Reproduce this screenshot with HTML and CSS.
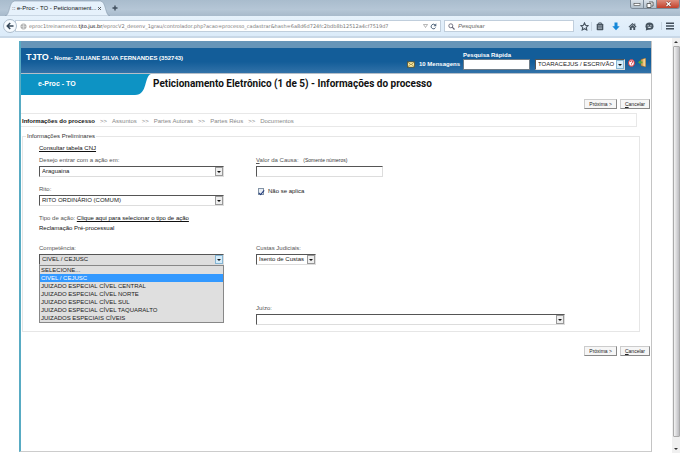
FILE: index.html
```
<!DOCTYPE html>
<html lang="pt-BR">
<head>
<meta charset="utf-8">
<title>e-Proc - TO - Peticionamento Eletrônico</title>
<link rel="stylesheet" href="styles.css">
</head>
<body>
<header class="browser">
  <div class="tabbar">
    <div class="tab">
      <svg class="tab-shape" viewBox="0 0 108 16" preserveAspectRatio="none" aria-hidden="true"><path d="M0 16C5 16 4 1 10 1H98C104 1 103 16 108 16Z" fill="#e6f1fb" stroke="#8497aa" stroke-width=".6"/></svg>
      <span class="tab-title">:: e-Proc - TO - Peticionament...</span>
      <button class="plain" aria-label="Fechar aba"><svg width="5" height="5" viewBox="0 0 5 5"><path d="M1 1l3 3M4 1L1 4" stroke="#444" stroke-width=".8"/></svg></button>
    </div>
    <button class="plain" aria-label="Nova aba"><svg width="6" height="6" viewBox="0 0 6 6"><path d="M3 .5v5M.5 3h5" stroke="#3f4d5c" stroke-width="1.4"/></svg></button>
    <div class="window-buttons">
      <button class="win" aria-label="Minimizar"><svg width="8" height="6" viewBox="0 0 8 6"><rect x="1" y="2.5" width="6" height="2" fill="#fff" stroke="#444" stroke-width=".6"/></svg></button>
      <button class="win" aria-label="Restaurar"><svg width="8" height="7" viewBox="0 0 8 7"><path d="M3 1h4v4H6M1 2.500h4v4H1z" fill="#fff" stroke="#444" stroke-width=".8"/></svg></button>
      <button class="win close" aria-label="Fechar"><svg width="7" height="6" viewBox="0 0 7 6"><path d="M1.500 1l4 4M5.500 1l-4 4" stroke="#6b2a20" stroke-width="2.200"/><path d="M1.500 1l4 4M5.500 1l-4 4" stroke="#fff" stroke-width="1.300"/></svg></button>
    </div>
  </div>
  <div class="toolbar">
    <button class="back" aria-label="Voltar"><svg width="8" height="8" viewBox="0 0 8 8"><path d="M7.500 4H1.500M4.200 1L1.300 4l2.900 3" fill="none" stroke="#39495a" stroke-width="1.600"/></svg></button>
    <div class="urlbar">
      <svg width="7" height="7" viewBox="0 0 7 7"><circle cx="3.500" cy="3.500" r="3" fill="#aaa"/><path d="M.7 3.500h5.600M3.500.500v6M1.300 1.500q2.200 1.500 4.400 0M1.300 5.500q2.200-1.500 4.400 0" fill="none" stroke="#eee" stroke-width=".5"/></svg>
      <span class="url">eproc1treinamento.<b>tjto.jus.br</b>/eprocV2_desenv_1grau/controlador.php?acao=processo_cadastrar&amp;hash=6a8d6d724fc2bdb8b12512a4cf7519d7</span>
      <svg width="5" height="4" viewBox="0 0 5 4"><path d="M.5.500h4L2.500 3.500z" fill="none" stroke="#888" stroke-width=".6"/></svg>
      <button class="plain" aria-label="Recarregar"><svg width="7" height="7" viewBox="0 0 7 7"><path d="M5.500 4.500A2.300 2.300 0 1 1 5 1.900" fill="none" stroke="#53677d" stroke-width="1"/><path d="M6.300.300v2.900H3.500z" fill="#53677d"/></svg></button>
    </div>
    <label class="searchbar">
      <svg width="7" height="7" viewBox="0 0 7 7"><circle cx="2.800" cy="2.800" r="2" fill="none" stroke="#667" stroke-width=".9"/><path d="M4.200 4.200L6.500 6.500" stroke="#667" stroke-width="1.200"/></svg>
      <input type="search" placeholder="Pesquisar" aria-label="Pesquisar">
    </label>
    <div class="tools">
      <button class="plain" aria-label="Favoritos"><svg width="9" height="9" viewBox="0 0 9 9"><path d="M4.500.900l1.100 2.400 2.500.300-1.800 1.800.5 2.500-2.300-1.200-2.300 1.200.5-2.500L.900 3.600l2.500-.3z" fill="none" stroke="#46535f" stroke-width="1.100"/></svg></button>
      <button class="plain divided" aria-label="Lista"><svg width="8" height="9" viewBox="0 0 8 9"><path d="M2.700 2V.900h2.600V2" fill="none" stroke="#46535f" stroke-width=".9"/><rect x=".7" y="1.800" width="6.600" height="6.400" rx=".8" fill="#46535f"/><path d="M2 3.800h4M2 5.200h4M2 6.600h4" stroke="#cbd5df" stroke-width=".6"/></svg></button>
      <button class="plain" aria-label="Downloads"><svg width="8" height="9" viewBox="0 0 8 9"><path d="M2.500.500h3v3.700h2.200L4 8.300.300 4.200h2.200z" fill="#1487d8"/></svg></button>
      <button class="plain" aria-label="Início"><svg width="9" height="9" viewBox="0 0 9 9"><path d="M4.500 1L.500 4.700l.7.700L4.500 2.400l3.300 3 .7-.7L7.300 3.500V1.500h-1v1.200z" fill="#46535f"/><path d="M1.800 5.300l2.700-2.400 2.700 2.400V8H5.300V5.800H3.700V8H1.800z" fill="#46535f"/></svg></button>
      <button class="plain" aria-label="Conversa"><svg width="9" height="9" viewBox="0 0 9 9"><ellipse cx="4.500" cy="4.200" rx="4" ry="3.600" fill="#46535f"/><path d="M1.300 5.500L.800 8.500 4 7.500z" fill="#46535f"/><circle cx="3.100" cy="3.300" r=".6" fill="#dfe9f2"/><circle cx="5.900" cy="3.300" r=".6" fill="#dfe9f2"/><path d="M2.200 4.700q2.300 2.400 4.600 0z" fill="#dfe9f2"/></svg></button>
      <button class="plain divided" aria-label="Menu"><svg width="8" height="8" viewBox="0 0 8 8"><path d="M0 1.200h8M0 4h8M0 6.800h8" stroke="#414d59" stroke-width="1.500"/></svg></button>
    </div>
  </div>
</header>

<div class="viewport">
  <main class="app">
    <div class="strip"></div>
    <div class="topbar">
      <div class="user"><span class="brand">TJTO</span> - Nome: JULIANE SILVA FERNANDES (352743)</div>
      <a class="messages" href="#"><svg width="8" height="7" viewBox="0 0 8 7"><rect x=".5" y=".8" width="7" height="5.400" fill="#fbe9a0" stroke="#4a4526" stroke-width=".7"/><path d="M.8 1l3.200 2.800L7.200 1M.8 6l2.300-2.500M7.200 6L4.900 3.500" fill="none" stroke="#6c5b1c" stroke-width=".6"/></svg>10 Mensagens</a>
      <div class="quick">
        <label for="quick">Pesquisa Rápida</label>
        <input id="quick" type="text">
      </div>
      <div class="combo active role">
        <select aria-label="Perfil"><option>TOARACEJUS / ESCRIVÃO</option></select><i></i>
      </div>
      <div class="top-icons">
        <a href="#" aria-label="Ajuda"><svg width="7" height="8" viewBox="0 0 7 8"><ellipse cx="3.500" cy="4" rx="2.900" ry="3.400" fill="#fff" stroke="#d22b35" stroke-width="1"/><path d="M2.300 3q.2-1.200 1.300-1.200T4.700 3q0 .6-1.100 1.200v.8M3.600 5.500v.9" fill="none" stroke="#d22b35" stroke-width=".9"/></svg></a>
        <a href="#" aria-label="Sair"><svg width="8" height="9" viewBox="0 0 8 9"><path d="M3 1.500L7.700 0v9L3 7.700z" fill="#d9a558" stroke="#8d6228" stroke-width=".5"/><path d="M5.300 1.300L7.300.6v7.900l-2-.7z" fill="#f3d091"/><path d="M0 4.300l2.600-2.200v1.300H4.500v1.900H2.600v1.300z" fill="#55a43b"/></svg></a>
      </div>
    </div>
    <div class="titlebar">
      <div class="system"><svg viewBox="0 0 130 21" preserveAspectRatio="none" aria-hidden="true"><path d="M0 0H130C123 2 127 21 114 21H0Z" fill="#0d93c4"/></svg><span>e-Proc - TO</span></div>
      <h1>Peticionamento Eletrônico (1 de 5) - Informações do processo</h1>
    </div>
    <div class="actions top"><button>Próxima &gt;</button><button><u>C</u>ancelar</button></div>
    <nav class="steps"><strong>Informações do processo</strong><span>&gt;&gt;</span><span>Assuntos</span><span>&gt;&gt;</span><span>Partes Autoras</span><span>&gt;&gt;</span><span>Partes Réus</span><span>&gt;&gt;</span><span>Documentos</span></nav>

    <fieldset>
      <legend>Informações Preliminares</legend>
      <div class="form">
        <div class="cell">
          <a class="cnj" href="#">Consultar tabela CNJ</a>
          <label for="local">Desejo entrar com a ação em:</label>
          <div class="combo"><select id="local"><option>Araguaina</option></select><i></i></div>
        </div>
        <div class="cell bottom">
          <label for="valor"><u>V</u>alor da Causa: <small>(Somente números)</small></label>
          <input id="valor" class="money" type="text">
        </div>
        <div class="cell">
          <label for="rito">Rito:</label>
          <div class="combo"><select id="rito"><option>RITO ORDINÁRIO (COMUM)</option></select><i></i></div>
        </div>
        <div class="cell">
          <label class="check"><input type="checkbox" checked> Não se aplica</label>
        </div>
        <div class="cell wide">
          <div class="line">Tipo de ação: <a href="#">Clique aqui para selecionar o tipo de ação</a></div>
          <div class="line dark">Reclamação Pré-processual</div>
        </div>
        <div class="cell tall">
          <label for="comp">Competência:</label>
          <div class="combo active open">
            <select id="comp"><option>CIVEL / CEJUSC</option></select><i></i>
            <ul class="menu" role="listbox" aria-label="Competência">
              <li role="option">SELECIONE...</li>
              <li role="option" aria-selected="true">CIVEL / CEJUSC</li>
              <li role="option">JUIZADO ESPECIAL CÍVEL CENTRAL</li>
              <li role="option">JUIZADO ESPECIAL CÍVEL NORTE</li>
              <li role="option">JUIZADO ESPECIAL CÍVEL SUL</li>
              <li role="option">JUIZADO ESPECIAL CÍVEL TAQUARALTO</li>
              <li role="option">JUIZADOS ESPECIAIS CÍVEIS</li>
            </ul>
          </div>
        </div>
        <div class="cell tall">
          <label for="custas">Custas Judiciais:</label>
          <div class="combo small"><select id="custas"><option>Isento de Custas</option></select><i></i></div>
        </div>
        <div class="cell second">
          <label for="juizo">Juízo:</label>
          <div class="combo long"><select id="juizo"><option></option></select><i></i></div>
        </div>
      </div>
    </fieldset>
    <div class="actions"><button>Próxima &gt;</button><button><u>C</u>ancelar</button></div>
  </main>
  <div class="scrollbar" aria-hidden="true"><b class="up"></b><span></span><b class="down"></b></div>
</div>
</body>
</html>
```
FILE: styles.css
```
* { box-sizing: border-box; }
body {
  margin: 0;
  height: 100vh;
  display: flex;
  flex-direction: column;
  background: #fff;
  color: #222;
  font: 6px/8px "Liberation Sans", Arial, sans-serif;
}
button, input, select { font: inherit; color: inherit; margin: 0; }
svg { display: block; flex: none; }
a { color: inherit; }
.plain { border: 0; padding: 0; background: none; }

/* Browser frame */
.browser { flex: none; }
.tabbar {
  height: 16px;
  display: flex;
  align-items: center;
  gap: 2px;
  padding-left: 5px;
  background: linear-gradient(#a9bccd, #b5c6d6 60%, #a8bacb);
}
.tab {
  position: relative;
  width: 105px;
  height: 16px;
  display: flex;
  align-items: center;
  justify-content: space-between;
  padding: 0 8px 0 7px;
}
.tab-shape { position: absolute; inset: 0; width: 100%; height: 100%; }
.tab > :not(.tab-shape) { position: relative; }
.tab-title { white-space: nowrap; color: #111; }
.window-buttons {
  align-self: flex-start;
  margin-left: auto;
  display: flex;
  height: 9px;
  border: 1px solid #7c8a98;
  border-top: 0;
  border-radius: 0 0 3px 3px;
  overflow: hidden;
}
.win {
  width: 13px;
  padding: 0;
  display: grid;
  place-items: center;
  border: 0;
  border-right: 1px solid #7c8a98;
  background: linear-gradient(#dbe3ea, #b1bfcb);
}
.win.close { width: 22px; border: 0; background: linear-gradient(#dd8c7c, #c3402b); }
.toolbar {
  height: 22px;
  display: flex;
  align-items: center;
  gap: 3px;
  padding: 0 6px 0 3px;
  background: linear-gradient(#e6f1fb, #dcebf9);
  border-bottom: 2px solid #c9d8e7;
}
.back {
  position: relative;
  width: 14px;
  height: 14px;
  margin-right: -5px;
  padding: 0;
  display: grid;
  place-items: center;
  border: 1px solid #aebdcc;
  border-radius: 50%;
  background: #f7fbff;
}
.urlbar, .searchbar {
  height: 12px;
  display: flex;
  align-items: center;
  gap: 3px;
  border: 1px solid #c0cedc;
  background: #fff;
}
.urlbar { flex: 1; min-width: 0; padding: 0 3px 0 4px; gap: 2px; color: #777; }
.url { flex: 1; white-space: nowrap; overflow: hidden; font-family: "DejaVu Sans", sans-serif; font-size: 5px; }
.url b { font-weight: 400; color: #000; }
.searchbar { width: 130px; padding: 0 3px; }
.searchbar input { width: 100%; padding: 0; border: 0; background: none; outline: 0; }
.searchbar input::placeholder { color: #666; font-style: italic; }
.tools { display: flex; align-items: center; gap: 8px; margin-left: 3px; }
.divided { border-left: 1px solid #c7d4e1; padding-left: 4px; margin-left: -6px; }
.divided:last-child { margin-left: -1px; }

/* Page and scrollbar */
.viewport { flex: 1; min-height: 0; display: flex; }
.app {
  flex: 1;
  min-width: 0;
  margin: 3px 20px 1px 19px;
  border: 1px solid #ccc;
  border-left: 2px solid #58abc3;
  border-top: 0;
  border-right: 1px solid #c4c4c4;
}
.scrollbar {
  width: 8px;
  display: flex;
  flex-direction: column;
  align-items: center;
  gap: 3px;
  padding: 3px 0;
  background: #f0f0f0;
}
.scrollbar span {
  width: 7px;
  flex: 1;
  margin-bottom: 8px;
  border: 1px solid #aaa;
  border-radius: 1px;
  background: linear-gradient(90deg, #f3f3f3, #bdbdc1);
}
.scrollbar b { border: 2px solid transparent; }
.scrollbar .up { border-top: 0; border-bottom-color: #333; }
.scrollbar .down { border-bottom: 0; border-top-color: #333; }

/* Header */
.strip { height: 7px; background: #6795b8; }
.topbar {
  height: 26px;
  display: flex;
  align-items: flex-end;
  padding: 0 5px 3px 5px;
  background: linear-gradient(#135d99 55%, #3272a8);
  border-bottom: 1px solid #b5bec8;
  color: #fff;
  font-weight: bold;
}
.user { margin: 0 auto 8px 0; }
.brand { font-size: 9px; }
.messages { display: flex; align-items: center; gap: 4px; margin: 0 3px 2px 0; text-decoration: none; }
.quick { width: 67px; margin-right: 5px; }
.quick label { display: block; white-space: nowrap; }
.quick input { display: block; width: 100%; height: 11px; padding: 0 2px; background: #fff; border: 1px solid #6e7c88; color: #222; }
.top-icons { display: flex; align-items: center; gap: 3px; margin: 0 0 3px 3px; }
.titlebar { display: flex; height: 21px; }
.system { position: relative; width: 130px; padding: 6px 17px; color: #fff; font-size: 7px; font-weight: bold; }
.system svg { position: absolute; inset: 0; width: 100%; height: 100%; }
.system span { position: relative; }
h1 { margin: 4px 0 0 2px; font: bold 10px/12px Roboto, "Liberation Sans", sans-serif; color: #111; white-space: nowrap; }

/* Actions and steps */
.actions { display: flex; justify-content: flex-end; gap: 3px; margin-right: 1px; }
.actions.top { margin-top: 4px; }
.actions button {
  height: 10px;
  min-width: 30px;
  padding: 0 4px;
  border: 1px solid #ccc;
  border-right-color: #888;
  border-bottom-color: #888;
  background: #f6f6f6;
  font-size: 5px;
  line-height: 7px;
}
.steps {
  display: flex;
  gap: 5px;
  height: 14px;
  margin: 4px 14px 0 0;
  padding: 3px 1px;
  border: 1px solid #e8e8e8;
  border-left: 0;
  color: #888;
}
.steps strong { color: #111; }

/* Form */
fieldset { min-width: 0; margin: 5px 11px 14px 1px; padding: 0; border: 1px solid #e6e6e6; }
legend { margin-left: 3px; padding: 0 1px; color: #333; }
.form {
  display: grid;
  grid-template-columns: 185px 1fr;
  grid-template-rows: 41px 29px 30px 60px 27px;
  column-gap: 32px;
  padding: 4px 16px 0;
}
.cell label { display: block; height: 9px; color: #555; }
.cell label + * { margin-top: 1px; }
.cell.bottom { padding-top: 12px; }
.cell.wide { grid-column: 1 / -1; }
.cell.second { grid-column: 2; }
.cnj { display: block; height: 12px; color: #111; }
.line { height: 10px; color: #555; }
.line a, .dark { color: #111; }
small { margin-left: 3px; font-size: 5px; color: #333; }
.money {
  display: block;
  width: 127px;
  height: 11px;
  padding: 0 2px;
  border: 1px solid #ddd;
  border-top-color: #555;
  border-left-color: #555;
}
.cell .check { display: flex; align-items: center; gap: 4px; padding: 3px 0 0 2px; color: #222; }
.check input {
  appearance: none;
  width: 6px;
  height: 7px;
  border: 1px solid #8293a5;
  background: #e9eef5;
  display: grid;
  place-items: center;
}
.check input::after { content: ""; width: 2px; height: 5px; border: solid #223b7c; border-width: 0 1px 1px 0; rotate: 40deg; }

.combo {
  position: relative;
  display: flex;
  height: 11px;
  border: 1px solid #ddd;
  border-top-color: #555;
  border-left-color: #555;
  background: #fff;
  color: #222;
}
.combo select {
  appearance: none;
  width: 100%;
  height: 9px;
  padding: 0 9px 0 2px;
  border: 0;
  background: none;
  outline: 0;
  line-height: 9px;
}
.combo i {
  position: absolute;
  top: 0;
  right: 0;
  width: 8px;
  height: 9px;
  border: 1px solid #999;
  background: #eee;
  pointer-events: none;
}
.combo i::after {
  content: "";
  position: absolute;
  left: 1px;
  top: 3px;
  border: 2px solid transparent;
  border-top-color: #111;
  border-bottom: 0;
}
.combo.active i { background: #d5ecfa; border-color: #85b5d3; }
.combo.role { width: 90px; font-weight: 400; }
.combo.small { width: 60px; }
.combo.long { width: 309px; }
.combo.open { background: #dedede; }
.menu {
  position: absolute;
  left: -1px;
  right: -1px;
  top: 10px;
  z-index: 1;
  margin: 0;
  padding: 0;
  list-style: none;
  border: 1px solid #888;
  background: #dfdfdf;
}
.menu li { height: 8px; padding-left: 1px; white-space: nowrap; }
.menu li[aria-selected] { background: #3399ff; color: #fff; }
```
